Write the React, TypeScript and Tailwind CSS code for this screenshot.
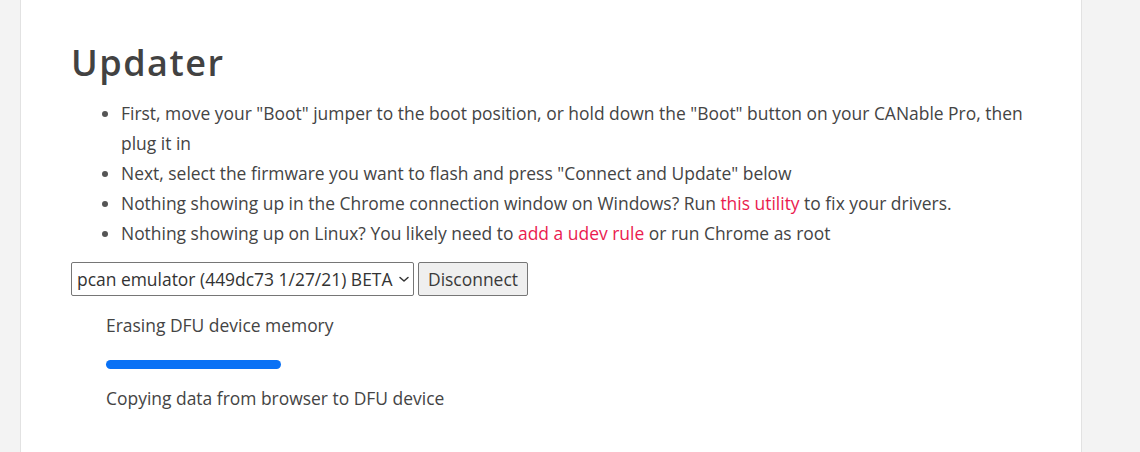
import React from "react";

export default function App() {
  const font = { fontFamily: '"Open Sans", "Noto Sans", sans-serif' };
  return (
    <div className="flex h-[452px] w-[1140px] bg-[#f3f3f3] text-[#444]" style={font}>
      <div className="w-[20px] shrink-0" />
      <div className="w-[1062px] shrink-0 border-x border-[#e2e2e2] bg-white pl-[50px] pr-[40px]">
        <h1 className="mt-[41px] text-[36px] font-semibold leading-[44px] tracking-[1.5px] text-[#424242]">
          Updater
        </h1>
        <ul className="mt-[13px] list-disc pl-[50px] text-[17.45px] leading-[30px] marker:text-[#555]">
          <li>
            First, move your "Boot" jumper to the boot position, or hold down the "Boot" button on your CANable Pro, then
            plug it in
          </li>
          <li>Next, select the firmware you want to flash and press "Connect and Update" below</li>
          <li>
            Nothing showing up in the Chrome connection window on Windows? Run{" "}
            <a className="text-[#ea1b4f]">this utility</a> to fix your drivers.
          </li>
          <li>
            Nothing showing up on Linux? You likely need to <a className="text-[#ea1b4f]">add a udev rule</a> or run
            Chrome as root
          </li>
        </ul>
        <div className="mt-[14px] flex items-center gap-[4px] text-[17.45px]">
          <div className="flex h-[34px] w-[343px] items-center justify-between rounded-[2px] border border-[#767676] bg-white pl-[5px] pr-[3px] text-[#333]">
            <span className="whitespace-nowrap">pcan emulator (449dc73 1/27/21) BETA</span>
            <svg width="12" height="12" viewBox="0 0 12 12" fill="none">
              <path d="M2 4.5 L6 8 L10 4.5" stroke="#333" strokeWidth="1.5" strokeLinecap="round" strokeLinejoin="round" />
            </svg>
          </div>
          <button className="h-[34px] rounded-[2px] border border-[#767676] bg-[#efefef] px-[9px] text-[#3a3a3a]">
            Disconnect
          </button>
        </div>
        <div className="pl-[35px] text-[17.45px] leading-[30px]">
          <div className="mt-[14px]">Erasing DFU device memory</div>
          <div className="mt-[20px] h-[9px] w-[175px] rounded-full bg-[#0971f5]" />
          <div className="mt-[14px]">Copying data from browser to DFU device</div>
        </div>
      </div>
    </div>
  );
}
